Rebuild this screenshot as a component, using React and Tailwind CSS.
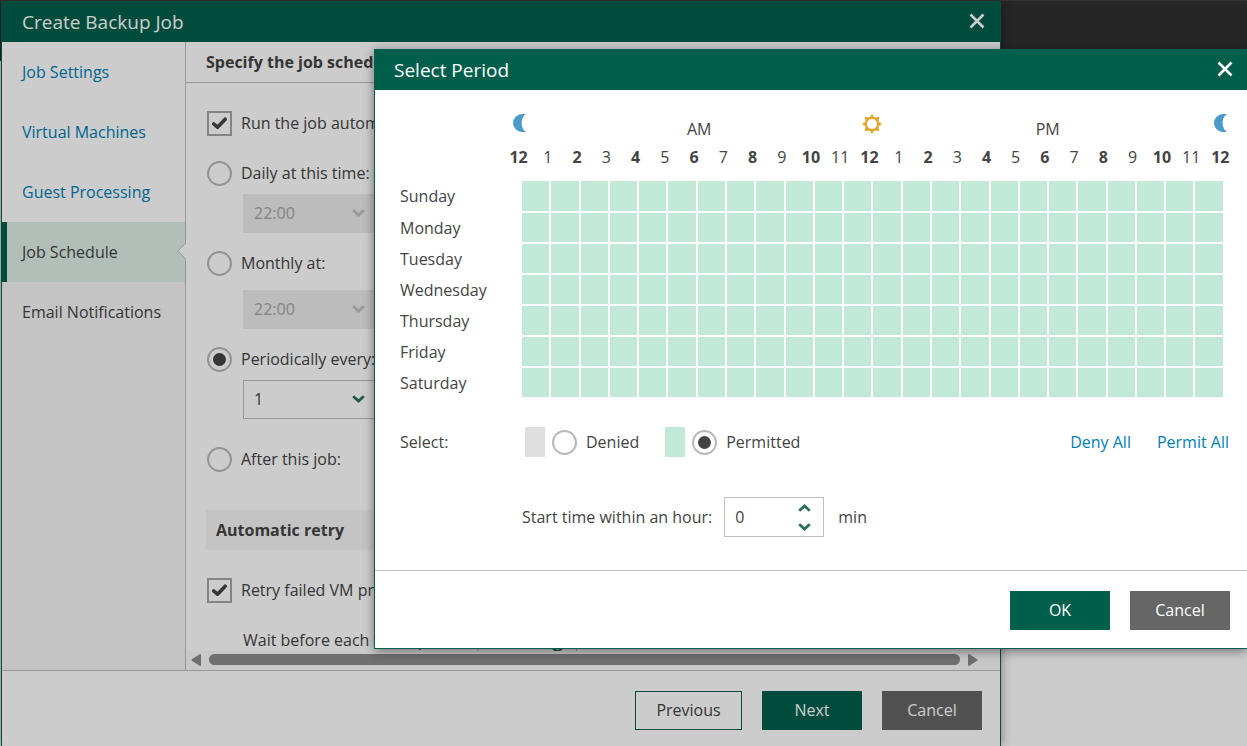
import React, { useState } from 'react';

const steps = [
  { name: 'Job Settings', state: 'done' },
  { name: 'Virtual Machines', state: 'done' },
  { name: 'Guest Processing', state: 'done' },
  { name: 'Job Schedule', state: 'active' },
  { name: 'Email Notifications', state: 'next' },
];

const stepStyles = {
  done: 'bg-white border-white text-[#007fb6]',
  active: 'bg-[#deefe7] border-[#005f4b] text-[#444444]',
  next: 'bg-[#f6f6f6] border-[#f6f6f6] text-[#444444]',
};

const days = [
  'Sunday',
  'Monday',
  'Tuesday',
  'Wednesday',
  'Thursday',
  'Friday',
  'Saturday',
];

// 12 1 2 ... 11 12 1 ... 11 12
const hours = Array.from({ length: 25 }, (_, i) => i % 12 || 12);

const buttonStyles = {
  primary: 'w-[100px] bg-[#005f4b] text-white',
  dark: 'w-[100px] bg-[#666666] text-white',
  outline: 'w-[107px] border border-[#005f4b] bg-white text-[#444444]',
};

function Button({ kind, children }) {
  return (
    <button type="button" className={`h-[39px] pb-0.5 ${buttonStyles[kind]}`}>
      {children}
    </button>
  );
}

function CloseButton() {
  return (
    <button type="button" aria-label="Close" className="mb-0.5 text-white">
      <svg width="16" height="16" viewBox="0 0 16 16" fill="none">
        <path d="M1.5 1.5l13 13M14.5 1.5l-13 13" stroke="currentColor" strokeWidth="2.6" />
      </svg>
    </button>
  );
}

function Chevron({ up }) {
  return (
    <svg width="13" height="8" viewBox="0 0 13 8" fill="none">
      <path
        d={up ? 'M1.2 6.8L6.5 2l5.3 4.8' : 'M1.2 1.2L6.5 6l5.3-4.8'}
        stroke="currentColor"
        strokeWidth="2.8"
      />
    </svg>
  );
}

function Moon() {
  return (
    <svg width="13" height="18" viewBox="0 0 13 18" fill="#4a9aca">
      <path d="M9 0h4C9.800 2 8.600 5.500 8.600 9s1.200 7 4.400 9H9A9 9 0 0 1 9 0z" />
    </svg>
  );
}

function Sun() {
  return (
    <svg width="20" height="20" viewBox="0 0 20 20">
      <path
        d="M10 0l2.300 3.300 4.800-.400-.400 4.800L20 10l-3.300 2.300.400 4.800-4.800-.400L10 20l-2.300-3.300-4.800.400.400-4.800L0 10l3.300-2.300-.400-4.800 4.800.400z"
        fill="#e2a834"
      />
      <circle cx="10" cy="10" r="5" fill="#fff" />
    </svg>
  );
}

function Radio({ id, name, label, checked, onChange }) {
  return (
    <div className="flex items-center h-10 gap-[9px]">
      <span className="relative flex">
        <input
          type="radio"
          id={id}
          name={name}
          checked={checked}
          onChange={onChange}
          className="peer appearance-none w-[25px] h-[25px] rounded-full border-2 border-[#b9b9b9] bg-white"
        />
        <span className="absolute inset-0 m-auto w-[13px] h-[13px] rounded-full bg-[#444444] hidden peer-checked:block pointer-events-none" />
      </span>
      <label htmlFor={id} className="whitespace-nowrap">
        {label}
      </label>
    </div>
  );
}

function Checkbox({ id, label }) {
  return (
    <div className="flex items-center h-10 gap-[9px]">
      <span className="relative flex">
        <input
          type="checkbox"
          id={id}
          defaultChecked
          className="peer appearance-none w-[25px] h-[25px] border-2 border-[#a6a6a6] bg-white"
        />
        <svg
          width="15"
          height="13"
          viewBox="0 0 15 13"
          fill="none"
          className="absolute inset-0 m-auto hidden peer-checked:block pointer-events-none"
        >
          <path d="M1.800 7L5.500 10.200 13.200 2.200" stroke="#444444" strokeWidth="3.600" strokeLinecap="round" strokeLinejoin="round" />
        </svg>
      </span>
      <label htmlFor={id} className="whitespace-nowrap">
        {label}
      </label>
    </div>
  );
}

function Dropdown({ label, value, disabled }) {
  return (
    <div className="relative w-[132px] h-10 ml-9 pt-px">
      <select
        aria-label={label}
        disabled={disabled}
        defaultValue={value}
        className={`appearance-none w-full h-[39px] pl-2.5 pb-0.5 border ${
          disabled
            ? 'bg-[#ebebeb] border-[#ebebeb] text-[#a6a6a6]'
            : 'bg-white border-[#bfbfbf] text-[#444444]'
        }`}
      >
        <option>{value}</option>
      </select>
      <span
        className={`absolute right-[10px] top-4 pointer-events-none ${
          disabled ? 'text-[#bfbfbf]' : 'text-[#26735a]'
        }`}
      >
        <Chevron />
      </span>
    </div>
  );
}

function Spinner({ id, value, onChange }) {
  return (
    <div className="flex w-[100px] h-10 border border-[#bfbfbf] bg-white">
      <input
        id={id}
        type="text"
        value={value}
        onChange={e => onChange(Number(e.target.value) || 0)}
        className="w-0 flex-1 pl-[10px] outline-none"
      />
      <div className="flex flex-col justify-center gap-[11px] pr-3 text-[#26735a]">
        <button type="button" aria-label="Increase" onClick={() => onChange(value + 1)}>
          <Chevron up />
        </button>
        <button type="button" aria-label="Decrease" onClick={() => onChange(value - 1)}>
          <Chevron />
        </button>
      </div>
    </div>
  );
}

function JobDialog() {
  const [mode, setMode] = useState('periodic');
  const [wait, setWait] = useState(10);

  return (
    <div className="flex flex-col flex-1 min-h-0 mt-px ml-px mr-[246px] border-x border-[#005f4b] bg-white shadow-[0_0_10px_rgba(0,0,0,0.4)]">
      <div className="flex items-center justify-between h-[41px] shrink-0 pl-5 pr-[15px] bg-[#005f4b] text-white">
        <h1 className="text-[19px]">Create Backup Job</h1>
        <CloseButton />
      </div>
      <div className="flex flex-1 min-h-0 border-b border-[#bfbfbf]">
        <nav className="flex flex-col w-[184px] shrink-0 border-r border-[#bfbfbf] bg-[#f6f6f6]">
          {steps.map(step => (
            <a
              key={step.name}
              href="#"
              className={`relative flex items-center h-[60px] pl-[15px] border-l-[5px] whitespace-nowrap ${stepStyles[step.state]}`}
            >
              {step.name}
              {step.state === 'active' && (
                <svg width="9" height="18" viewBox="0 0 9 18" className="absolute -right-px top-5">
                  <path d="M9 0v1L1 9l8 8v1z" fill="#ffffff" />
                  <path d="M8.500 0.500v.8L.8 9l7.700 7.700v.8" fill="none" stroke="#bfbfbf" />
                </svg>
              )}
            </a>
          ))}
        </nav>
        <main className="flex flex-col flex-1 min-w-0">
          <h2 className="flex items-center h-[41px] shrink-0 pl-5 border-b border-[#bfbfbf] font-bold whitespace-nowrap">
            Specify the job schedule
          </h2>
          <div className="flex-1 min-h-0 overflow-hidden pt-5 pl-[21px]">
            <Checkbox id="auto" label="Run the job automatically" />
            <div className="mt-2.5">
              <Radio id="daily" name="mode" label="Daily at this time:" checked={mode === 'daily'} onChange={() => setMode('daily')} />
              <Dropdown label="Daily time" value="22:00" disabled />
            </div>
            <div className="mt-2.5">
              <Radio id="monthly" name="mode" label="Monthly at:" checked={mode === 'monthly'} onChange={() => setMode('monthly')} />
              <div className="mt-1.5">
                <Dropdown label="Monthly time" value="22:00" disabled />
              </div>
            </div>
            <div className="mt-2.5">
              <Radio id="periodic" name="mode" label="Periodically every:" checked={mode === 'periodic'} onChange={() => setMode('periodic')} />
              <Dropdown label="Period" value="1" />
            </div>
            <div className="mt-5">
              <Radio id="after" name="mode" label="After this job:" checked={mode === 'after'} onChange={() => setMode('after')} />
            </div>
            <h3 className="flex items-center h-10 mt-[31px] -ml-px pl-2.5 bg-[#f6f6f6] font-bold">
              Automatic retry
            </h3>
            <div className="mt-5">
              <Checkbox id="retry" label="Retry failed VM processing:" />
            </div>
            <div className="flex items-center h-10 mt-2.5 pl-9">
              <label htmlFor="wait" className="w-[234px] shrink-0 whitespace-nowrap">
                Wait before each attempt for:
              </label>
              <Spinner id="wait" value={wait} onChange={setWait} />
            </div>
          </div>
          <div className="flex items-center h-[19px] shrink-0 pl-[5px] pr-[22px] pb-0.5 gap-2 bg-[#fafafa]">
            <svg width="10" height="12" viewBox="0 0 10 12" fill="#8b8b8b">
              <path d="M9 0q1 0 1 1v10q0 1-1 1L.8 6.800Q0 6 .8 5.200z" />
            </svg>
            <div className="flex-1 h-[11px] rounded-full bg-[#8b8b8b]" />
            <svg width="10" height="12" viewBox="0 0 10 12" fill="#8b8b8b">
              <path d="M1 0Q0 0 0 1v10q0 1 1 1l8.200-5.200q.8-.8 0-1.600z" />
            </svg>
          </div>
        </main>
      </div>
      <div className="flex justify-end gap-5 h-[75px] shrink-0 pt-5 pr-[18px]">
        <Button kind="outline">Previous</Button>
        <Button kind="primary">Next</Button>
        <Button kind="dark">Cancel</Button>
      </div>
    </div>
  );
}

function PeriodDialog() {
  const [paint, setPaint] = useState('permitted');
  const [denied, setDenied] = useState({});
  const [offset, setOffset] = useState(0);

  const paintCell = key => {
    setDenied({ ...denied, [key]: paint === 'denied' });
  };

  const denyAll = () => {
    const all = {};
    days.forEach(day => {
      for (let h = 0; h < 24; h++) all[`${day}-${h}`] = true;
    });
    setDenied(all);
  };

  return (
    <div
      role="dialog"
      aria-label="Select Period"
      className="absolute top-[49px] left-[374px] right-0 border border-r-0 border-[#005f4b] bg-white shadow-[0_2px_10px_rgba(0,0,0,0.45)]"
    >
      <div className="flex items-center justify-between h-10 pl-[19px] pr-[14px] bg-[#005f4b] text-white">
        <h2 className="text-[19px]">Select Period</h2>
        <CloseButton />
      </div>

      <div className="pt-6 pl-[25px] pr-[18px]">
        <div className="-mr-1.5 ml-[104px]">
          <div className="flex h-7">
            <span className="flex justify-center w-[30px]">
              <Moon />
            </span>
            <span className="flex-1 pt-[3px] pl-2 text-center">AM</span>
            <span className="flex justify-center w-[30px]">
              <Sun />
            </span>
            <span className="flex-1 pt-[3px] pl-1 text-center">PM</span>
            <span className="flex justify-center w-[30px]">
              <Moon />
            </span>
          </div>
          <div className="grid grid-cols-[repeat(25,minmax(0,1fr))] pt-[3px] text-center">
            {hours.map((hour, i) => (
              <span key={i} className={i % 2 === 0 ? 'font-bold' : ''}>
                {hour}
              </span>
            ))}
          </div>
        </div>

        <div className="mt-2.5 pr-1">
          <table className="table-fixed w-full border-collapse">
            <tbody>
              {days.map(day => (
                <tr key={day} className="h-[31px] first:h-8">
                  <th scope="row" className="w-[121px] p-0 text-left font-normal">
                    {day}
                  </th>
                  {hours.slice(0, 24).map((hour, h) => {
                    const key = `${day}-${h}`;
                    return (
                      <td
                        key={key}
                        onClick={() => paintCell(key)}
                        className={`p-0 border-2 border-white ${denied[key] ? 'bg-[#dfdfdf]' : 'bg-[#c2e8d7]'}`}
                      />
                    );
                  })}
                </tr>
              ))}
            </tbody>
          </table>
        </div>

        <div className="flex items-center mt-[23px] h-10">
          <span className="w-[125px]">Select:</span>
          <span className="w-5 h-[30px] mr-[7px] bg-[#dfdfdf]" />
          <Radio id="denied" name="paint" label="Denied" checked={paint === 'denied'} onChange={() => setPaint('denied')} />
          <span className="w-5 h-[30px] mr-[7px] ml-[26px] bg-[#c2e8d7]" />
          <Radio id="permitted" name="paint" label="Permitted" checked={paint === 'permitted'} onChange={() => setPaint('permitted')} />
          <div className="flex gap-[26px] ml-auto text-[#007fb6]">
            <a href="#" onClick={denyAll}>
              Deny All
            </a>
            <a href="#" onClick={() => setDenied({})}>
              Permit All
            </a>
          </div>
        </div>

        <div className="flex items-center h-10 mt-[35px] pl-[122px]">
          <label htmlFor="offset" className="mr-3 whitespace-nowrap">
            Start time within an hour:
          </label>
          <Spinner id="offset" value={offset} onChange={setOffset} />
          <span className="ml-[14px]">min</span>
        </div>
      </div>

      <div className="flex justify-end gap-5 mt-[33px] pt-5 pb-[18px] pr-[17px] border-t border-[#bfbfbf]">
        <Button kind="primary">OK</Button>
        <Button kind="dark">Cancel</Button>
      </div>
    </div>
  );
}

function App() {
  return (
    <div className="relative h-screen overflow-hidden bg-white font-['Open_Sans',sans-serif] text-base leading-6 text-[#444444]">
      <div className="absolute inset-x-0 top-0 h-[61px] border-t border-[#404040] bg-[#303030]" />
      <div className="relative flex flex-col h-full">
        <JobDialog />
      </div>
      <div className="absolute inset-0 bg-black/20" />
      <PeriodDialog />
    </div>
  );
}

export default App;
